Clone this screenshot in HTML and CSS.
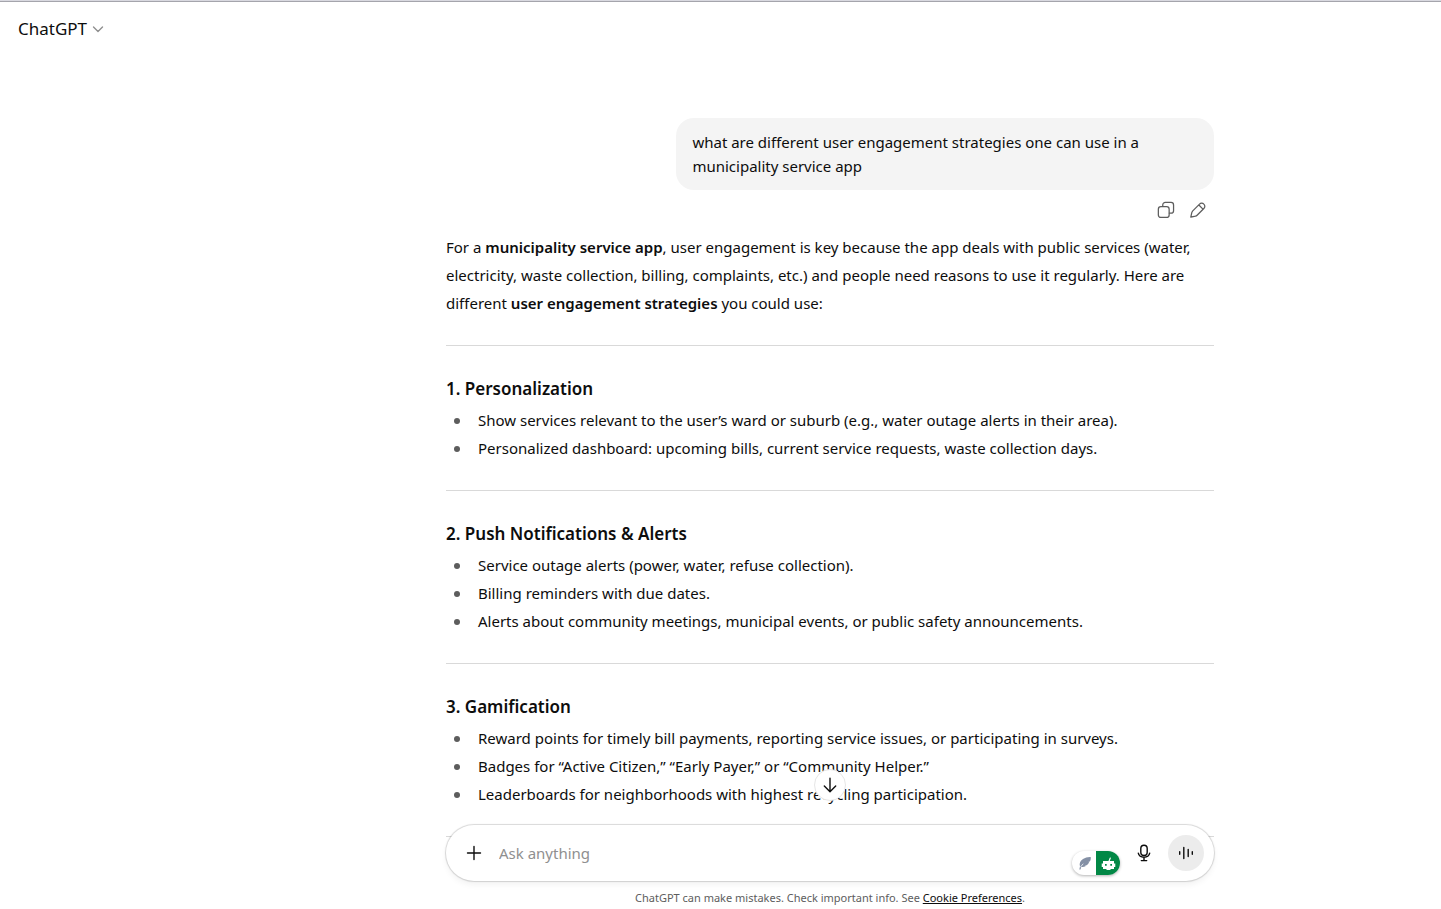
FILE: index.html
```html
<!DOCTYPE html>
<html lang="en">
<head>
<meta charset="utf-8">
<meta name="viewport" content="width=device-width, initial-scale=1">
<title>ChatGPT</title>
<link rel="stylesheet" href="styles.css">
</head>
<body>
<header class="topbar">
  <button class="model" type="button">ChatGPT
    <svg class="chevron" viewBox="0 0 12 12" aria-hidden="true"><path d="M1.5 4 6 8.5 10.5 4"/></svg>
  </button>
</header>
<main class="page">
  <div class="column">
    <p class="bubble">what are different user engagement strategies one can use in a municipality service app</p>
    <div class="actions">
      <button class="action" type="button" aria-label="Copy">
        <svg viewBox="0 0 20 20" aria-hidden="true"><rect x="1.500" y="6.300" width="12" height="12" rx="2.800"/><path d="M6.400 6V4.400a2.800 2.800 0 0 1 2.800-2.800h6.400a2.800 2.800 0 0 1 2.800 2.800v6.400a2.800 2.800 0 0 1-2.800 2.800H13.800"/></svg>
      </button>
      <button class="action" type="button" aria-label="Edit">
        <svg viewBox="0 0 20 20" aria-hidden="true"><path d="M11.700 3.500 4.200 11c-.6.600-.9 1.200-1.100 1.900L2 18l5.100-1.100c.7-.2 1.300-.5 1.900-1.100l7.500-7.500a3.200 3.200 0 0 0 0-4.800 3.200 3.200 0 0 0-4.800 0zM11 4.500l4.500 4.500"/></svg>
      </button>
    </div>
    <article class="answer">
      <p>For a <strong>municipality service app</strong>, user engagement is key because the app deals with public services (water, electricity, waste collection, billing, complaints, etc.) and people need reasons to use it regularly. Here are different <strong>user engagement strategies</strong> you could use:</p>
      <hr>
      <h3>1. Personalization</h3>
      <ul>
        <li>Show services relevant to the user’s ward or suburb (e.g., water outage alerts in their area).</li>
        <li>Personalized dashboard: upcoming bills, current service requests, waste collection days.</li>
      </ul>
      <hr>
      <h3>2. Push Notifications &amp; Alerts</h3>
      <ul>
        <li>Service outage alerts (power, water, refuse collection).</li>
        <li>Billing reminders with due dates.</li>
        <li>Alerts about community meetings, municipal events, or public safety announcements.</li>
      </ul>
      <hr>
      <h3>3. Gamification</h3>
      <ul>
        <li>Reward points for timely bill payments, reporting service issues, or participating in surveys.</li>
        <li>Badges for “Active Citizen,” “Early Payer,” or “Community Helper.”</li>
        <li>Leaderboards for neighborhoods with highest recycling participation.</li>
      </ul>
      <hr>
    </article>
  </div>
</main>
<div class="dock">
  <div class="dock-inner">
    <button class="scroll-down" type="button" aria-label="Scroll to bottom">
      <svg viewBox="0 0 20 20" aria-hidden="true"><path d="M10 3.300v13.200M4.300 11 10 16.700 15.700 11"/></svg>
    </button>
    <form class="composer">
      <button class="plain" type="button" aria-label="Add">
        <svg viewBox="0 0 20 20" aria-hidden="true"><path d="M10 3.500v13M3.500 10h13"/></svg>
      </button>
      <input class="prompt" type="text" placeholder="Ask anything" aria-label="Ask anything">
      <button class="assist" type="button" aria-label="Writing assistant">
        <svg class="assist-icon" viewBox="0 0 24 24" aria-hidden="true"><path class="feather" d="M7.300 18.500 8 15.500c-1-3 .2-5.800 3-7.500 2.300-1.500 5-2.200 7.700-2 .3 2-.2 3.500-1 4.500l-1.500.5 1 .3c-.6 1.300-1.500 2.200-2.500 3l-1.700.1.900.6c-1.500.9-3.300 1.200-4.600.9L8.500 18.500z"/><path class="quill" d="M8.500 16 11 13"/></svg>
        <svg class="assist-icon green" viewBox="0 0 24 24" aria-hidden="true"><path class="antenna" d="M12.700 11 14.300 7"/><path class="robot" fill-rule="evenodd" d="M7 10h11v2.500h1.300v3.500H18v2H7v-2H5.700v-3.500H7zm2 3v1.700h1.700V13zm5.300 0v1.700H16V13z"/><path class="robot" d="M10.500 18h4v1h-4z"/></svg>
      </button>
      <button class="plain" type="button" aria-label="Dictate">
        <svg viewBox="0 0 20 20" aria-hidden="true"><rect x="6.800" y="2.200" width="6.400" height="10.300" rx="3.200"/><path d="M4.300 10.200a5.800 5 0 0 0 11.400 0M10 14.500v3M7.300 17.600h5.400"/></svg>
      </button>
      <button class="voice" type="button" aria-label="Use voice mode">
        <svg viewBox="0 0 20 20" aria-hidden="true"><path d="M3.700 8.700v2.600M7.800 4.500v11M12.200 6.500v7M16.300 8.700v2.600"/></svg>
      </button>
    </form>
    <p class="note">ChatGPT can make mistakes. Check important info. See <a href="#cookies">Cookie Preferences</a>.</p>
  </div>
</div>
</body>
</html>
```
FILE: styles.css
```css
* { box-sizing: border-box; margin: 0; padding: 0; }

body {
  height: 100vh;
  overflow: hidden;
  display: flex;
  flex-direction: column;
  border-top: 1px solid #d9d9e0;
  background: #fff;
  color: #0d0d0d;
  font: 15px/28px "Noto Sans", "Open Sans", sans-serif;
}

button {
  border: 0;
  background: none;
  color: inherit;
  font: inherit;
  cursor: pointer;
}

svg {
  display: block;
  fill: none;
  stroke: currentColor;
  stroke-width: 1.4;
  stroke-linecap: round;
  stroke-linejoin: round;
}

.topbar {
  flex: none;
  border-top: 1px solid #a5a5ac;
  padding: 13px 18px 11px;
}

.model {
  display: flex;
  align-items: center;
  gap: 5px;
  font-size: 17px;
}

.chevron { width: 12px; height: 12px; color: #8f8f8f; }

.page {
  flex: 1;
  min-height: 0;
  overflow: hidden;
  padding: 64px 0 0 219px;
}

.column {
  max-width: 768px;
  margin: 0 auto;
  display: flex;
  flex-direction: column;
}

.bubble {
  align-self: flex-end;
  max-width: 70%;
  padding: 12px 16px;
  border-radius: 18px;
  background: #f4f4f4;
  line-height: 24px;
}

.actions {
  display: flex;
  justify-content: flex-end;
  padding: 4px 0 7px;
}

.action { padding: 7px; color: #5d5d5d; }
.action svg { width: 18px; height: 18px; }

.answer strong,
.answer h3 { font-weight: 600; }

.answer hr {
  height: 1px;
  margin: 28px 0;
  border: 0;
  background: #d9d9d9;
}

.answer h3 {
  padding-top: 1px;
  margin-bottom: 3px;
  font-size: 17px;
}

.answer ul { list-style: none; }

.answer li {
  display: flex;
  align-items: center;
  gap: 18px;
  padding-left: 8px;
}

.answer li::before {
  content: "";
  flex: none;
  width: 6px;
  height: 6px;
  margin-top: 2px;
  border-radius: 50%;
  background: #5d5d5d;
}

/* The dock floats above the end of the conversation */
.dock {
  position: absolute;
  left: 0;
  right: 0;
  bottom: 0;
  padding-left: 219px;
  pointer-events: none;
}

.dock-inner {
  max-width: 768px;
  margin: 0 auto;
  display: flex;
  flex-direction: column;
  align-items: center;
  pointer-events: auto;
}

.scroll-down {
  margin-bottom: 24px;
  padding: 5px;
  border: 1px solid #e6e6e6;
  border-radius: 50%;
  background: #fff;
}

.scroll-down svg { width: 20px; height: 20px; }

.composer {
  align-self: stretch;
  display: flex;
  align-items: center;
  height: 56px;
  padding: 0 10px;
  border-radius: 28px;
  background: #fff;
  box-shadow: 0 0 1px 1px rgba(0, 0, 0, .15), 0 4px 6px rgba(0, 0, 0, .05);
}

.plain { padding: 8px; }
.plain svg { width: 20px; height: 20px; }

.prompt {
  flex: 1;
  min-width: 0;
  margin-left: 7px;
  border: 0;
  outline: 0;
  background: none;
  font: inherit;
}

.prompt::placeholder { color: #8f8f8f; opacity: 1; }

.assist {
  align-self: flex-end;
  display: flex;
  margin: 0 6px 6px 0;
  border-radius: 12px;
  overflow: hidden;
  background: #fff;
  box-shadow: 0 1px 3px rgba(0, 0, 0, .3);
}

.assist-icon { width: 24px; height: 24px; stroke: none; }
.green { background: #028846; }
.feather { fill: #8490a5; }
.quill { stroke: #dfe3ea; stroke-width: 1; }
.robot { fill: #fff; }
.antenna { stroke: #fff; stroke-width: 1.2; }

.voice {
  margin-left: 6px;
  padding: 8px;
  border-radius: 50%;
  background: #ececec;
}

.voice svg { width: 20px; height: 20px; }

.note {
  padding: 7px 0 2px;
  color: #5d5d5d;
  font-size: 11px;
  line-height: 19px;
}

.note a { color: #0d0d0d; }
```
